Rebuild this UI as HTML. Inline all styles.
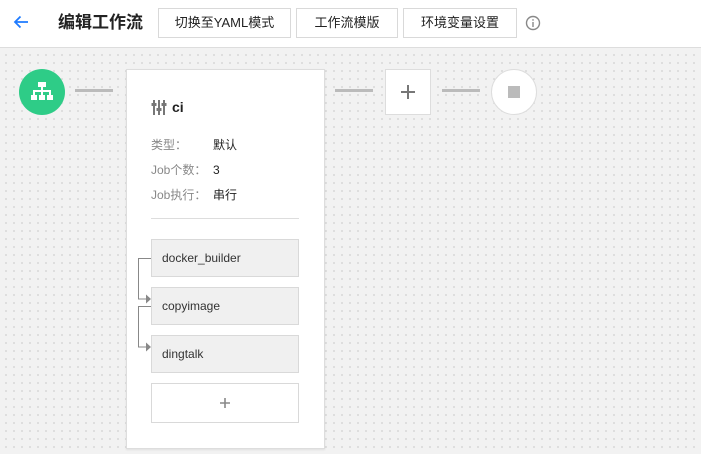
<!DOCTYPE html>
<html><head><meta charset="utf-8"><style>
*{box-sizing:border-box;margin:0;padding:0}
body{width:701px;height:454px;overflow:hidden;font-family:"Liberation Sans","Noto Sans CJK SC",sans-serif;background:#f2f2f2;position:relative}
.hdr{position:absolute;left:0;top:0;width:701px;height:48px;background:#fff;border-bottom:1px solid #ddd}
.canvas{position:absolute;left:0;top:49px;width:701px;height:405px;background-color:#f2f2f2;background-image:radial-gradient(circle,#c4c4c4 0.6px,transparent 0.9px);background-size:8px 8px;background-position:2px 2px}
.btn{position:absolute;top:8px;height:30px;border:1px solid #d9d9d9;background:#fff;font-size:13px;color:#222;text-align:center;line-height:28px}
.abs{position:absolute}
.line{position:absolute;height:3px;background:#bbb}
.lbl{position:absolute;left:151px;font-size:12px;color:#888;line-height:16px}
.val{position:absolute;left:213px;font-size:12px;color:#222;line-height:16px}
.job{position:absolute;left:151px;width:148px;height:38px;background:#f0f0f0;border:1px solid #d9d9d9;font-size:12px;color:#333;padding-left:10px;line-height:36px}
</style></head><body>
<div class="hdr">
<svg class="abs" style="left:12px;top:14px" width="18" height="16" viewBox="0 0 18 16"><path d="M16 8H3M8.5 2.5L3 8l5.5 5.5" stroke="#1e7bff" stroke-width="1.8" fill="none"/></svg>
<div class="abs" style="left:58px;top:12px;font-size:17px;line-height:22px;font-weight:bold;color:#222">编辑工作流</div>
<div class="btn" style="left:158px;width:133px">切换至YAML模式</div>
<div class="btn" style="left:296px;width:102px">工作流模版</div>
<div class="btn" style="left:403px;width:114px">环境变量设置</div>
<svg class="abs" style="left:525px;top:15px" width="16" height="16" viewBox="0 0 16 16"><circle cx="8" cy="8" r="6.5" stroke="#888" stroke-width="1.4" fill="none"/><rect x="7.3" y="7" width="1.4" height="5" fill="#888"/><rect x="7.3" y="4.2" width="1.4" height="1.5" fill="#888"/></svg>
</div>
<div class="canvas"></div>
<div class="abs" style="left:19px;top:69px;width:46px;height:46px;border-radius:50%;background:#2ecc87"></div>
<svg class="abs" style="left:30px;top:81px" width="24" height="22" viewBox="0 0 24 22"><g fill="#fff"><rect x="8" y="1" width="8" height="5"/><rect x="11" y="6" width="2" height="4"/><rect x="3" y="9" width="18" height="2"/><rect x="3" y="11" width="2" height="3"/><rect x="11" y="11" width="2" height="3"/><rect x="19" y="11" width="2" height="3"/><rect x="1" y="14" width="6" height="5"/><rect x="9" y="14" width="6" height="5"/><rect x="17" y="14" width="6" height="5"/></g></svg>
<div class="line" style="left:75px;top:89px;width:38px"></div>
<div class="abs" style="left:126px;top:69px;width:199px;height:380px;background:#fff;border:1px solid #ddd;box-shadow:0 1px 2px rgba(0,0,0,.08)"></div>
<svg class="abs" style="left:151px;top:100px" width="16" height="15" viewBox="0 0 16 15"><g fill="#777"><rect x="2" y="0" width="2" height="15"/><rect x="7" y="0" width="2" height="15"/><rect x="12" y="0" width="2" height="15"/><rect x="0.5" y="3" width="5" height="3"/><rect x="5.5" y="8" width="5" height="3"/><rect x="10.5" y="3" width="5" height="3"/></g></svg>
<div class="abs" style="left:172px;top:99px;font-size:14px;font-weight:bold;color:#222">ci</div>
<div class="lbl" style="top:137px">类型：</div><div class="val" style="top:137px">默认</div>
<div class="lbl" style="top:162px">Job个数：</div><div class="val" style="top:162px">3</div>
<div class="lbl" style="top:187px">Job执行：</div><div class="val" style="top:187px">串行</div>
<div class="abs" style="left:151px;top:218px;width:148px;height:1px;background:#ddd"></div>
<div class="job" style="top:239px">docker_builder</div>
<div class="job" style="top:287px">copyimage</div>
<div class="job" style="top:335px">dingtalk</div>
<svg class="abs" style="left:135px;top:255px" width="18" height="120" viewBox="0 0 18 120"><g stroke="#888" stroke-width="1" fill="none"><path d="M16 3.5H3.5V44H12"/><path d="M16 51.5H3.5V92H12"/></g><g fill="#888"><path d="M11 39.5L16 44L11 48.5Z"/><path d="M11 87.5L16 92L11 96.5Z"/></g></svg>
<div class="abs" style="left:151px;top:383px;width:148px;height:40px;background:#fff;border:1px solid #d9d9d9"></div>
<svg class="abs" style="left:219px;top:397px" width="12" height="12" viewBox="0 0 12 12"><path d="M6 1v10M1 6h10" stroke="#888" stroke-width="1.6"/></svg>
<div class="line" style="left:335px;top:89px;width:38px"></div>
<div class="abs" style="left:385px;top:69px;width:46px;height:46px;background:#fff;border:1px solid #ddd"></div>
<svg class="abs" style="left:399px;top:83px" width="18" height="18" viewBox="0 0 18 18"><path d="M9 2v14M2 9h14" stroke="#777" stroke-width="2"/></svg>
<div class="line" style="left:442px;top:89px;width:38px"></div>
<div class="abs" style="left:491px;top:69px;width:46px;height:46px;border-radius:50%;background:#fff;border:1px solid #ddd"></div>
<div class="abs" style="left:508px;top:86px;width:12px;height:12px;background:#bbb"></div>
</body></html>
